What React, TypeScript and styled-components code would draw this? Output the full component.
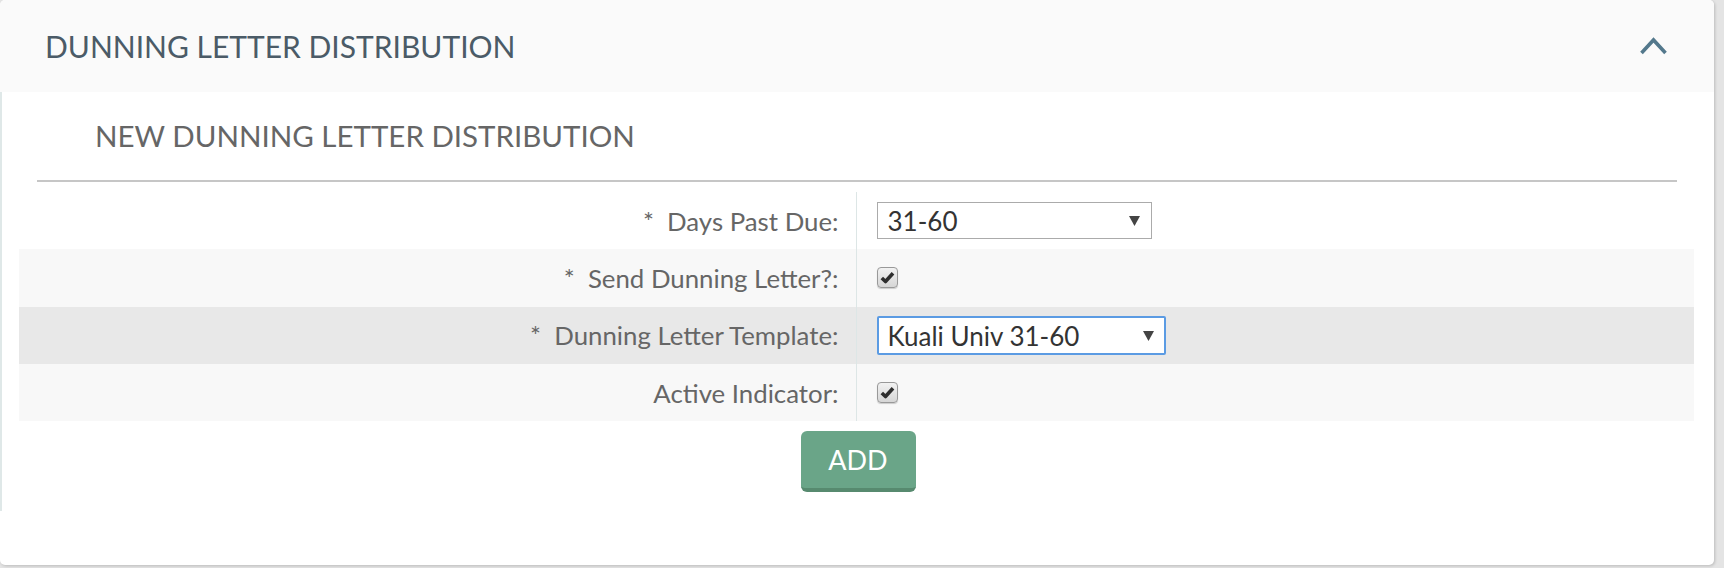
import styled, { createGlobalStyle } from 'styled-components'

const GlobalStyle = createGlobalStyle`
  html, body {
    margin: 0;
    padding: 0;
  }

  body {
    width: 1724px;
    height: 568px;
    overflow: hidden;
    background: #e4e4e4;
    font-family: Lato, 'Open Sans', sans-serif;
  }
`

const Card = styled.section`
  width: 1714px;
  height: 565px;
  background: #fff;
  border-radius: 5px;
  box-shadow: 1px 1px 3px rgba(0, 0, 0, 0.18);
  overflow: hidden;
`

const Header = styled.header`
  height: 92px;
  display: flex;
  align-items: center;
  justify-content: space-between;
  padding: 0 47px 0 45px;
  background: #fafafa;
`

const Title = styled.h2`
  margin: 0;
  font-size: 30px;
  font-weight: 400;
  color: #4b5b67;
`

const Toggle = styled.button`
  all: unset;
  display: flex;
  cursor: pointer;
  margin-top: -2px;
`

const Body = styled.div`
  border-left: 2px solid #dfe8e8;
  padding-bottom: 19px;
`

const SubHeader = styled.h3`
  margin: 0 37px 0 35px;
  padding: 25px 0 26px 58px;
  border-bottom: 2px solid #c6c6c6;
  font-size: 29.5px;
  line-height: 37px;
  font-weight: 400;
  color: #666;
`

const Table = styled.div`
  margin: 10px 20px 0 17px;
`

const Row = styled.div<{ $bg: string }>`
  display: grid;
  grid-template-columns: 1fr 1fr;
  height: 57.3px;
  background: ${(p) => p.$bg};
`

const Label = styled.div`
  display: flex;
  align-items: center;
  justify-content: flex-end;
  padding-right: 17px;
  border-right: 1px solid #dde6e6;
  font-size: 25.8px;
  color: #666;
  white-space: pre;
`

const Value = styled.div`
  display: flex;
  align-items: center;
  padding-left: 20px;
`

const SelectWrap = styled.div<{ $width: number; $focus?: boolean }>`
  position: relative;
  width: ${(p) => p.$width}px;
  height: ${(p) => (p.$focus ? 39 : 37)}px;
  margin-top: ${(p) => (p.$focus ? 1 : 0)}px;
`

const Select = styled.select<{ $focus?: boolean }>`
  appearance: none;
  box-sizing: border-box;
  width: 100%;
  height: 100%;
  margin: 0;
  padding: 0 0 0 ${(p) => (p.$focus ? 9 : 10)}px;
  border: ${(p) => (p.$focus ? '2px solid #5b9be3' : '1px solid #ababab')};
  border-radius: ${(p) => (p.$focus ? 2 : 0)}px;
  background: #fff;
  font-family: Lato, 'Open Sans', sans-serif;
  font-size: 26px;
  color: #333;
  outline: none;
`

const Arrow = styled.svg`
  position: absolute;
  right: 12px;
  top: 50%;
  transform: translateY(-50%);
  pointer-events: none;
`

const CheckBox = styled.span`
  display: inline-flex;
  align-items: center;
  justify-content: center;
  box-sizing: border-box;
  width: 21px;
  height: 21px;
  border: 1px solid #999;
  border-radius: 4px;
  background: linear-gradient(#f2f2f2, #d6d6d6);
  box-shadow: 0 1px 1px rgba(0, 0, 0, 0.18);
`

const Actions = styled.div`
  display: flex;
  justify-content: center;
  padding-top: 10px;
`

const AddButton = styled.button`
  width: 115px;
  height: 61px;
  padding: 0;
  border: none;
  border-bottom: 4px solid #578a6f;
  border-radius: 6px;
  background: #6aa588;
  font-family: Lato, 'Open Sans', sans-serif;
  font-size: 27px;
  color: #fff;
  cursor: pointer;
`

const Chevron = () => (
  <svg width="27" height="19" viewBox="0 0 27 19">
    <path d="M1.5 17 L13.5 4 L25.5 17" fill="none" stroke="#53788c" strokeWidth="3.6" />
  </svg>
)

const Check = () => (
  <CheckBox>
    <svg width="15" height="13" viewBox="0 0 15 13">
      <path d="M1.8 7 L5.5 10.5 L13 2.2" fill="none" stroke="#2e2e2e" strokeWidth="3.6" strokeLinejoin="round" />
    </svg>
  </CheckBox>
)

const Dropdown = ({ value, width, focus }: { value: string; width: number; focus?: boolean }) => (
  <SelectWrap $width={width} $focus={focus}>
    <Select $focus={focus} defaultValue={value}>
      <option>{value}</option>
    </Select>
    <Arrow width="11" height="10" viewBox="0 0 11 10">
      <path d="M0 0 H11 L5.5 10 Z" fill="#444" />
    </Arrow>
  </SelectWrap>
)

export default function App() {
  return (
    <>
      <GlobalStyle />
      <Card>
        <Header>
          <Title>DUNNING LETTER DISTRIBUTION</Title>
          <Toggle aria-label="Collapse">
            <Chevron />
          </Toggle>
        </Header>
        <Body>
          <SubHeader>NEW DUNNING LETTER DISTRIBUTION</SubHeader>
          <Table>
            <Row $bg="#fff">
              <Label>{'*  Days Past Due:'}</Label>
              <Value>
                <Dropdown value="31-60" width={275} />
              </Value>
            </Row>
            <Row $bg="#f8f8f8">
              <Label>{'*  Send Dunning Letter?:'}</Label>
              <Value>
                <Check />
              </Value>
            </Row>
            <Row $bg="#e8e8e8">
              <Label>{'*  Dunning Letter Template:'}</Label>
              <Value>
                <Dropdown value="Kuali Univ 31-60" width={289} focus />
              </Value>
            </Row>
            <Row $bg="#f8f8f8">
              <Label>Active Indicator:</Label>
              <Value>
                <Check />
              </Value>
            </Row>
          </Table>
          <Actions>
            <AddButton>ADD</AddButton>
          </Actions>
        </Body>
      </Card>
    </>
  )
}
